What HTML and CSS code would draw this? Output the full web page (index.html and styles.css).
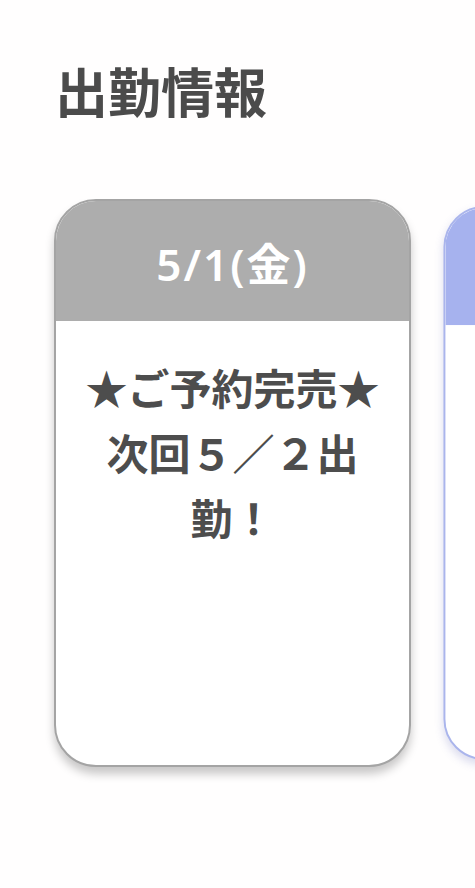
FILE: index.html
```html
<!DOCTYPE html>
<html lang="ja">
<head>
<meta charset="utf-8">
<title>出勤情報</title>
<link rel="stylesheet" href="styles.css">
</head>
<body>
<main class="page">
  <h1 class="title">出勤情報</h1>
  <div class="slider">
    <section class="card card-past">
      <div class="card-head">5/1(金)</div>
      <div class="card-body">★ご予約完売★次回５／２出勤！</div>
    </section>
    <section class="card card-next">
      <div class="card-head"></div>
      <div class="card-body"></div>
    </section>
  </div>
</main>
</body>
</html>
```
FILE: styles.css
```css
html, body {
  margin: 0;
  padding: 0;
  background: #fff;
}
body {
  width: 475px;
  height: 888px;
  overflow: hidden;
  font-family: "Noto Sans CJK JP", "Noto Sans", sans-serif;
  color: #4a4a4a;
}
.page {
  padding-top: 64px;
  height: 824px;
  background: #fffefe;
}
.title {
  margin: 0 0 0 55px;
  font-size: 53px;
  line-height: 1;
  font-weight: 700;
  color: #4b4b4b;
}
.slider {
  display: flex;
  gap: 28px;
  margin-top: 82px;
  padding-left: 54px;
  padding-bottom: 16px;
  overflow: hidden;
}
.card {
  flex: 0 0 357px;
  height: 568px;
  box-sizing: border-box;
  border: 2px solid #a4a4a4;
  border-radius: 42px;
  background: #fff;
  overflow: hidden;
  box-shadow: 0 7px 10px rgba(0, 0, 0, 0.22);
  display: flex;
  flex-direction: column;
}
.card-head {
  flex: 0 0 120px;
  background: #adadad;
  color: #fff;
  font-family: "Noto Sans", "Noto Sans CJK JP", sans-serif;
  font-size: 44px;
  font-weight: 600;
  letter-spacing: 2px;
  display: flex;
  align-items: center;
  justify-content: center;
  padding-top: 2px;
  box-sizing: border-box;
}
.card-body {
  padding: 33px 20px 0;
  font-size: 42px;
  line-height: 65px;
  font-weight: 700;
  text-align: center;
  color: #4d4d4d;
}
.card-next {
  border-color: #aab5ec;
  transform: scale(0.975);
  box-shadow: 0 5px 9px rgba(90, 100, 180, 0.22);
}
.card-next .card-head {
  background: #a6b2ee;
}
```
